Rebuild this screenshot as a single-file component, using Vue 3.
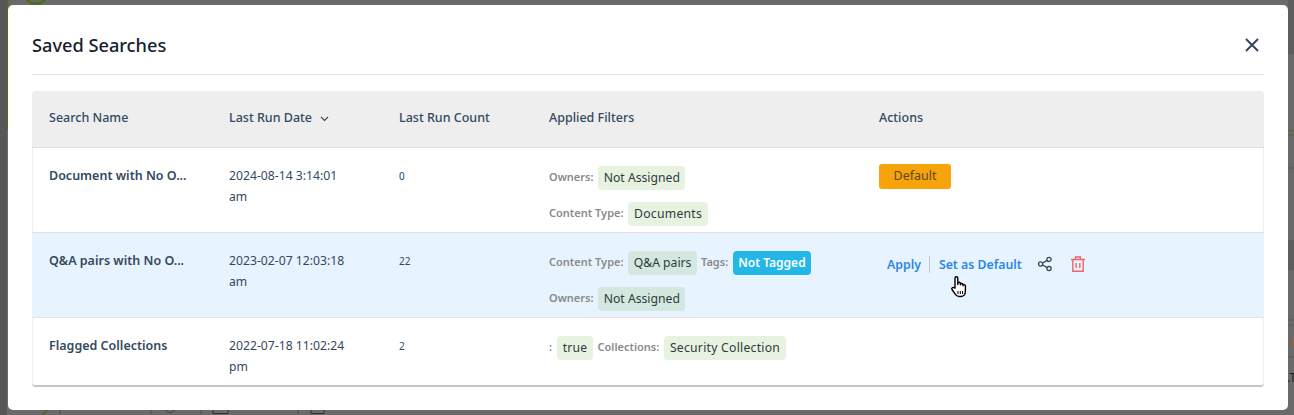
<script setup>
const rows = [
  { name: 'Document with No O...', date: '2024-08-14 3:14:01', ampm: 'am', count: '0',
    filters: [[{ l: 'Owners:', v: 'Not Assigned' }], [{ l: 'Content Type:', v: 'Documents', loose: true }]], kind: 'default' },
  { name: 'Q&A pairs with No O...', date: '2023-02-07 12:03:18', ampm: 'am', count: '22',
    filters: [[{ l: 'Content Type:', v: 'Q&A pairs' }, { l: 'Tags:', v: 'Not Tagged', blue: true }], [{ l: 'Owners:', v: 'Not Assigned' }]], kind: 'hover' },
  { name: 'Flagged Collections', date: '2022-07-18 11:02:24', ampm: 'pm', count: '2',
    filters: [[{ l: ':', v: 'true', loose: true }, { l: 'Collections:', v: 'Security Collection', loose: true }]], kind: 'none' }
]
</script>

<template>
  <div class="page">
    <svg class="backdrop" width="1294" height="415" viewBox="0 0 1294 415" fill="none">
      <rect x="0" y="0" width="7" height="415" fill="#575757"/>
      <rect x="1288" y="0" width="6" height="54" fill="#5e5e5e"/>
      <rect x="1288" y="240" width="6" height="30" fill="#5e5e5e"/>
      <path d="M7.5 0V130" stroke="#4f6a22" stroke-width="1.5"/>
      <circle cx="36" cy="-7" r="11" stroke="#4f6a22" stroke-width="3"/>
      <path d="M1288 130.5h6" stroke="#4f6a22"/>
      <path d="M1288 135h6M1288 168h6M1288 320h6M1288 325h6M1288 357h6" stroke="#585858"/>
      <path d="M42 415l6-5" stroke="#4f6a22" stroke-width="2"/>
      <path d="M60 410v4M151 410v4M201 410v4M298 410v4" stroke="#484848"/>
      <path d="M165 410l5 3 5-3" stroke="#484848"/>
      <path d="M213 410v3.5h15V410M311 410v3.5h13V410" stroke="#333"/>
      <text x="1290" y="347" class="bgtext orange">C</text>
      <text x="1287" y="382" class="bgtext dark">.T</text>
    </svg>
    <section class="modal">
      <header class="head">
        <h2>Saved Searches</h2>
        <svg class="close" width="16" height="16" viewBox="0 0 16 16" aria-label="Close"><path d="M2 2l12 12M14 2L2 14" stroke="#34495e" stroke-width="2" fill="none"/></svg>
      </header>
      <div class="table">
        <div class="row th">
          <div class="cell">Search Name</div>
          <div class="cell">Last Run Date
            <svg class="chev" width="9" height="6" viewBox="0 0 9 6"><path d="M1 1l3.5 3.5L8 1" stroke="#34495e" stroke-width="1.1" fill="none"/></svg>
          </div>
          <div class="cell">Last Run Count</div>
          <div class="cell">Applied Filters</div>
          <div class="cell">Actions</div>
        </div>
        <div v-for="r in rows" :key="r.name" class="row tr" :class="{ hover: r.kind === 'hover' }">
          <div class="cell name">{{ r.name }}</div>
          <div class="cell date">{{ r.date }}<br>{{ r.ampm }}</div>
          <div class="cell count">{{ r.count }}</div>
          <div class="cell filters">
            <div v-for="(line, i) in r.filters" :key="i" class="fline">
              <template v-for="f in line" :key="f.l">
                <span class="flabel">{{ f.l }}</span>
                <span class="tag" :class="{ blue: f.blue, loose: f.loose }">{{ f.v }}</span>
              </template>
            </div>
          </div>
          <div class="cell actions">
            <span v-if="r.kind === 'default'" class="default">Default</span>
            <div v-if="r.kind === 'hover'" class="links">
              <a class="apply">Apply</a>
              <a class="set">Set as Default</a>
              <svg class="share" width="16" height="16" viewBox="0 0 16 16" fill="none" stroke="#34495e" stroke-width="1.3">
                <circle cx="3.6" cy="8" r="2.1"/><circle cx="12" cy="3.4" r="2.1"/><circle cx="12" cy="12.6" r="2.1"/>
                <path d="M5.5 7l4.7-2.6M5.5 9l4.7 2.6"/>
              </svg>
              <svg class="trash" width="16" height="16" viewBox="0 0 16 16" fill="none" stroke="#f4626b" stroke-width="1.4">
                <path d="M1 3.5h14M5.5 3.2V1h5v2.2M2.8 3.5v11.7h10.4V3.5M6.2 7v5M9.8 7v5"/>
              </svg>
            </div>
          </div>
        </div>
      </div>
    </section>
    <svg class="cursor" width="20" height="24" viewBox="0 0 20 24">
      <path d="M6 13V3.2a1.4 1.4 0 0 1 2.8 0V9.5V8.6a1.3 1.3 0 0 1 2.6 0v1.2a1.3 1.3 0 0 1 2.6 0v1a1.2 1.2 0 0 1 2.4 0v5.4c0 3-1.8 5.3-4.6 5.3H10c-2 0-3-1-4-2.6l-3-4.4c-.9-1.5 1-2.8 2-1.6z" fill="#fff" stroke="#000" stroke-width="1.4" stroke-linejoin="round"/>
      <path d="M9 16v3M11.3 16v3M13.6 16v3" stroke="#000"/>
    </svg>
  </div>
</template>

<style scoped>
.page {
  position: relative;
  box-sizing: border-box;
  width: 1294px;
  height: 415px;
  padding: 5px 6px 5px 8px;
  overflow: hidden;
  background: #6a6a6a;
  font-family: "Noto Sans", "Open Sans", sans-serif;
  color: #34495e;
}
.backdrop { position: absolute; left: 0; top: 0; }
.bgtext { font-size: 12px; }
.orange { fill: #a85a2a; }
.dark { fill: #1c1c1c; }
.modal {
  position: relative;
  box-sizing: border-box;
  height: 405px;
  width: 1280px;
  padding: 0 24px;
  background: #fff;
  border-radius: 5px;
}
.head {
  display: flex;
  align-items: center;
  justify-content: space-between;
  box-sizing: border-box;
  height: 70px;
  padding-top: 10px;
  border-bottom: 1px solid #e2e2e2;
  margin-bottom: 16px;
}
h2 { margin: 0; font-size: 18.2px; font-weight: 500; color: #16202c; }
.close { margin-right: 4px; }
.table {
  border-radius: 4px;
  overflow: hidden;
  box-shadow: inset 1px 0 0 #efefef, inset -1px 0 0 #efefef;
  border-bottom: 2px solid #c4c4c4;
}
.row { display: grid; grid-template-columns: 180px 170px 150px 330px 1fr; }
.cell { padding-left: 17px; }
.th { height: 56px; align-items: center; background: #eee; font-size: 12.5px; font-weight: 500; padding-bottom: 3px; box-sizing: border-box; }
.chev { margin-left: 5px; }
.tr { border-top: 1px solid #e2e2e2; height: 84px; }
.tr:last-child { height: 67px; }
.hover { background: #e7f3fe; }
.name { padding-top: 19px; font-size: 12.5px; font-weight: 600; }
.date { padding-top: 17px; font-size: 12.2px; line-height: 21px; }
.count { padding-top: 21px; font-size: 10px; }
.filters { padding-top: 18px; }
.fline { display: flex; align-items: flex-start; height: 36px; }
.flabel { font-size: 11px; font-weight: 600; color: #8a8a8a; margin-right: 4.6px; padding-top: 3px; }
.tag {
  height: 24px;
  line-height: 23px;
  padding: 0 5.6px;
  margin-right: 4px;
  background: rgba(140, 190, 100, 0.2);
  border-radius: 4px;
  font-size: 12.2px;
  color: #2e3b3e;
}
.tag.loose { letter-spacing: 0.25px; padding: 0 6px; }
.tag.blue { background: #22b7e6; color: #fff; font-weight: 600; font-size: 12px; padding: 0 5.5px; }
.default {
  display: block;
  width: 72px;
  height: 25px;
  margin-top: 16px;
  line-height: 24px;
  text-align: center;
  background: #f7a30a;
  color: #5c4a1c;
  border-radius: 3px;
  font-size: 12.5px;
}
.links { display: flex; align-items: center; margin-top: 23px; padding-left: 8px; font-size: 12.3px; font-weight: 600; color: #2b87e8; }
.apply { padding-right: 8px; border-right: 1px solid #c4c8cc; line-height: 17px; }
.set { padding-left: 9px; }
.share { margin-left: 15px; margin-top: -2px; }
.trash { margin-left: 17px; margin-top: -2px; }
.cursor { position: absolute; left: 949px; top: 275px; }
</style>
